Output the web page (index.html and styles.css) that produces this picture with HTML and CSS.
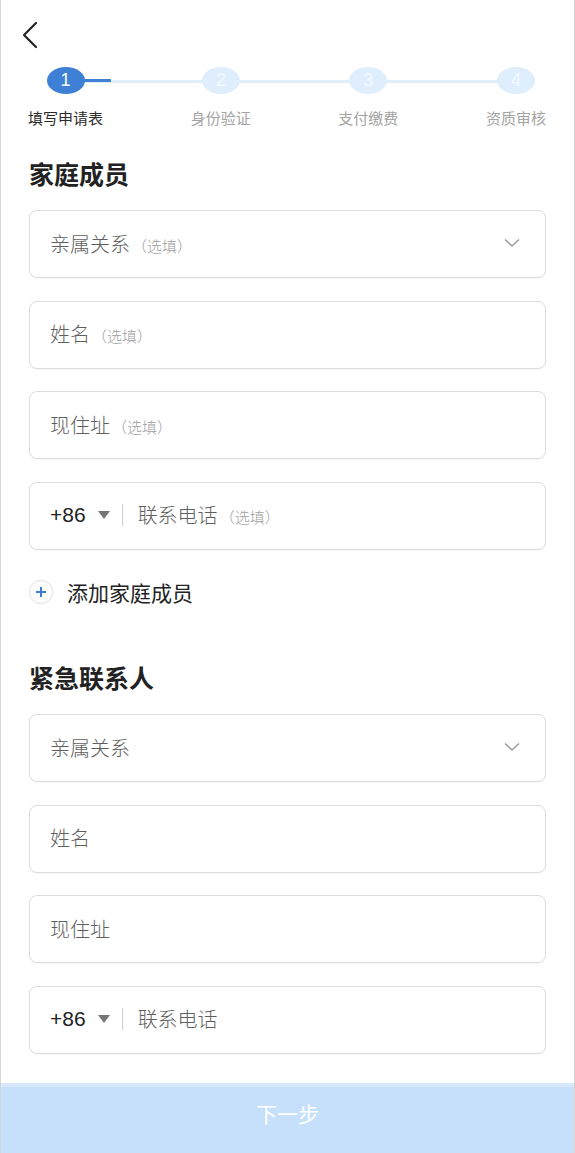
FILE: index.html
```html
<!DOCTYPE html>
<html lang="zh-CN">
<head>
    <meta charset="UTF-8">
    <meta name="viewport" content="width=device-width, initial-scale=1.0">
    <title>填写申请表</title>
    <link rel="stylesheet" href="styles.css">
</head>
<body>
    <div class="page">
        <div class="topbar">
            <svg class="back" width="18" height="28" viewBox="0 0 18 28">
                <polyline points="15,2 3,14 15,26" fill="none" stroke="#222" stroke-width="2.2" stroke-linecap="round" stroke-linejoin="round"/>
            </svg>
        </div>

        <div class="steps">
            <div class="track"></div>
            <div class="track-done"></div>
            <div class="step active">
                <span class="dot">1</span>
                <span class="step-label">填写申请表</span>
            </div>
            <div class="step">
                <span class="dot">2</span>
                <span class="step-label">身份验证</span>
            </div>
            <div class="step">
                <span class="dot">3</span>
                <span class="step-label">支付缴费</span>
            </div>
            <div class="step">
                <span class="dot">4</span>
                <span class="step-label">资质审核</span>
            </div>
        </div>

        <h2 class="section-title first">家庭成员</h2>
        <div class="field select">
            <span class="ph">亲属关系<small>（选填）</small></span>
            <svg width="16" height="10" viewBox="0 0 16 10"><polyline points="1,1.5 8,8 15,1.5" fill="none" stroke="#9a9a9a" stroke-width="1.5"/></svg>
        </div>
        <div class="field"><span class="ph">姓名<small>（选填）</small></span></div>
        <div class="field"><span class="ph">现住址<small>（选填）</small></span></div>
        <div class="field phone">
            <span class="code">+86</span>
            <span class="caret"></span>
            <span class="divider"></span>
            <span class="ph">联系电话<small>（选填）</small></span>
        </div>

        <div class="add-row">
            <span class="add-icon">
                <svg width="12" height="12" viewBox="0 0 12 12"><path d="M6 1v10M1 6h10" stroke="#3b7ccc" stroke-width="2"/></svg>
            </span>
            <span>添加家庭成员</span>
        </div>

        <h2 class="section-title">紧急联系人</h2>
        <div class="field select">
            <span class="ph">亲属关系</span>
            <svg width="16" height="10" viewBox="0 0 16 10"><polyline points="1,1.5 8,8 15,1.5" fill="none" stroke="#9a9a9a" stroke-width="1.5"/></svg>
        </div>
        <div class="field"><span class="ph">姓名</span></div>
        <div class="field"><span class="ph">现住址</span></div>
        <div class="field phone">
            <span class="code">+86</span>
            <span class="caret"></span>
            <span class="divider"></span>
            <span class="ph">联系电话</span>
        </div>

        <button class="next" disabled>下一步</button>
    </div>
</body>
</html>
```

FILE: styles.css
```css
body {
    margin: 0;
    font-family: "Noto Sans CJK SC", "Noto Sans", sans-serif;
    background-color: white;
    color: #222;
}
.page {
    width: 575px;
    height: 1153px;
    box-sizing: border-box;
    border-left: 1px solid #d6d6d6;
    border-right: 1px solid #d6d6d6;
    display: flex;
    flex-direction: column;
    overflow: hidden;
}
.topbar {
    height: 67px;
    padding-left: 20px;
    box-sizing: border-box;
    padding-top: 21px;
}
.back {
    display: block;
}

/* steps */
.steps {
    position: relative;
    display: flex;
    justify-content: space-between;
    margin: 0 28px 0 27px;
}
.track {
    position: absolute;
    top: 13px;
    left: 40px;
    right: 30px;
    height: 3px;
    background-color: #e1edf9;
}
.track-done {
    position: absolute;
    top: 12px;
    left: 50px;
    width: 33px;
    height: 3px;
    background-color: #3d80d6;
}
.step {
    position: relative;
    display: flex;
    flex-direction: column;
    align-items: center;
}
.dot {
    width: 38px;
    height: 27px;
    border-radius: 50%;
    background-color: #dfeefc;
    color: #f3f8fe;
    font-size: 18px;
    line-height: 27px;
    text-align: center;
    font-family: "Liberation Sans", sans-serif;
}
.step.active .dot {
    background-color: #3d80d6;
    color: white;
}
.step-label {
    margin-top: 14px;
    font-size: 15px;
    line-height: 20px;
    color: #a3a3a3;
}
.step.active .step-label {
    color: #2b2b2b;
}

.section-title {
    margin: 48px 28px 20px;
    font-size: 25px;
    line-height: 34px;
    font-weight: 600;
    color: #222;
}
.section-title.first {
    margin-top: 28px;
}

/* fields */
.field {
    flex-shrink: 0;
    height: 68px;
    margin: 0 28px 22.5px;
    box-sizing: border-box;
    border: 1px solid #dcdcdc;
    border-radius: 8px;
    padding: 0 25px 2px 20px;
    display: flex;
    align-items: center;
    box-shadow: 0 1px 2px rgba(0, 0, 0, 0.04);
}
.field.select {
    justify-content: space-between;
}
.ph {
    font-size: 20px;
    font-weight: 300;
    color: #5f5f5f;
}
.ph small {
    font-size: 15px;
    color: #a0a0a0;
    margin-left: 2px;
}
.code {
    font-family: "Liberation Sans", sans-serif;
    font-size: 21px;
    color: #222;
}
.caret {
    width: 0;
    height: 0;
    margin-left: 12px;
    border-left: 6px solid transparent;
    border-right: 6px solid transparent;
    border-top: 8px solid #777;
}
.divider {
    width: 1px;
    height: 22px;
    background-color: #cfcfcf;
    margin: 0 15px 0 12px;
}

.add-row {
    flex-shrink: 0;
    display: flex;
    align-items: center;
    margin: 0 28px;
    height: 40px;
    font-size: 21px;
    color: #222;
}
.add-icon {
    width: 22px;
    height: 22px;
    border-radius: 50%;
    border: 1px solid #e4e4e4;
    box-shadow: 0 0 2px rgba(0, 0, 0, 0.08);
    display: flex;
    align-items: center;
    justify-content: center;
    margin-right: 14px;
}

.next {
    flex-shrink: 0;
    margin-top: auto;
    height: 70px;
    padding: 0 0 14px;
    border: none;
    border-top: 4px solid #d6e8fc;
    background-color: #c6e0fb;
    color: white;
    font-family: "Noto Sans CJK SC", sans-serif;
    font-size: 21px;
    width: 100%;
}
```
